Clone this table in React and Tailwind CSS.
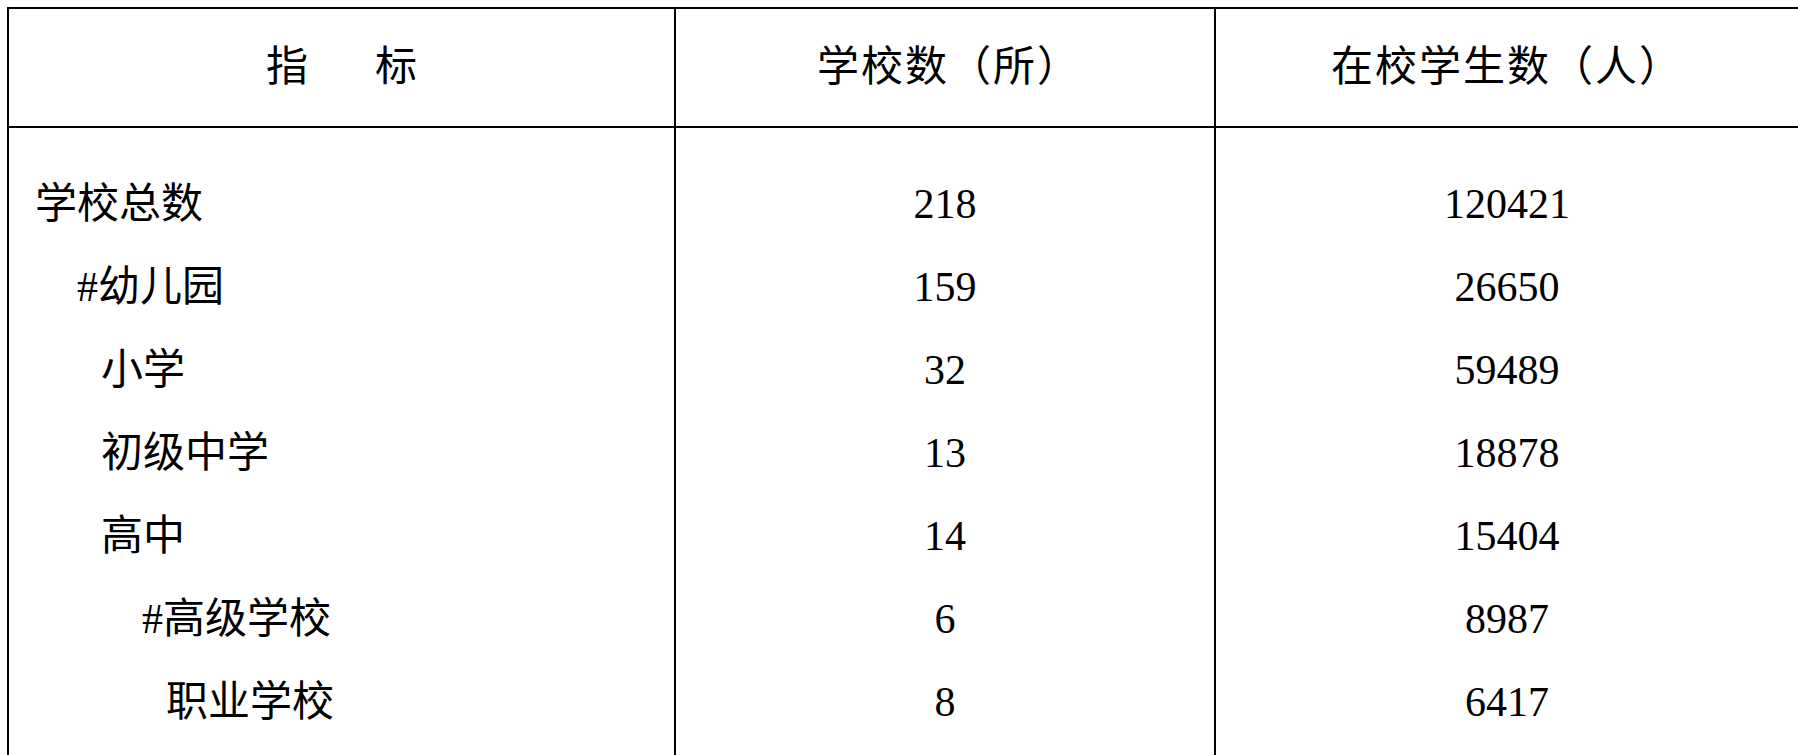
import React from "react";

const rows = [
  { name: "学校总数", indent: "pl-[26px]", a: "218", b: "120421" },
  { name: "#幼儿园", indent: "pl-[68px]", a: "159", b: "26650" },
  { name: "小学", indent: "pl-[92px]", a: "32", b: "59489" },
  { name: "初级中学", indent: "pl-[92px]", a: "13", b: "18878" },
  { name: "高中", indent: "pl-[92px]", a: "14", b: "15404" },
  { name: "#高级学校", indent: "pl-[133px]", a: "6", b: "8987" },
  { name: "职业学校", indent: "pl-[157px]", a: "8", b: "6417" },
];

export default function App() {
  return (
    <div
      className="w-[1798px] h-[755px] overflow-hidden bg-white pt-[7px] pl-[7px] text-black text-[42px]"
      style={{ fontFamily: '"Liberation Serif", "Noto Sans CJK SC", serif' }}
    >
      <div className="h-full flex flex-col border-l-2 border-t-2 border-black">
        <div className="grid grid-cols-[667px_540px_1fr] h-[119px] border-b-2 border-black">
          <div className="flex items-center justify-center gap-[67px] border-r-2 border-black">
            <span>指</span>
            <span>标</span>
          </div>
          <div className="flex items-center justify-center border-r-2 border-black tracking-[2px] pl-[8px]">
            学校数（所）
          </div>
          <div className="flex items-center justify-center tracking-[2px]">
            在校学生数（人）
          </div>
        </div>
        <div className="flex-1 grid grid-cols-[667px_540px_1fr]">
          <div className="border-r-2 border-black pt-[35px]">
            {rows.map((r) => (
              <div key={r.name} className={`h-[83px] leading-[83px] whitespace-nowrap ${r.indent}`}>
                {r.name}
              </div>
            ))}
          </div>
          <div className="border-r-2 border-black pt-[35px]">
            {rows.map((r) => (
              <div key={r.name} className="h-[83px] leading-[83px] text-center">
                {r.a}
              </div>
            ))}
          </div>
          <div className="pt-[35px]">
            {rows.map((r) => (
              <div key={r.name} className="h-[83px] leading-[83px] text-center">
                {r.b}
              </div>
            ))}
          </div>
        </div>
      </div>
    </div>
  );
}
